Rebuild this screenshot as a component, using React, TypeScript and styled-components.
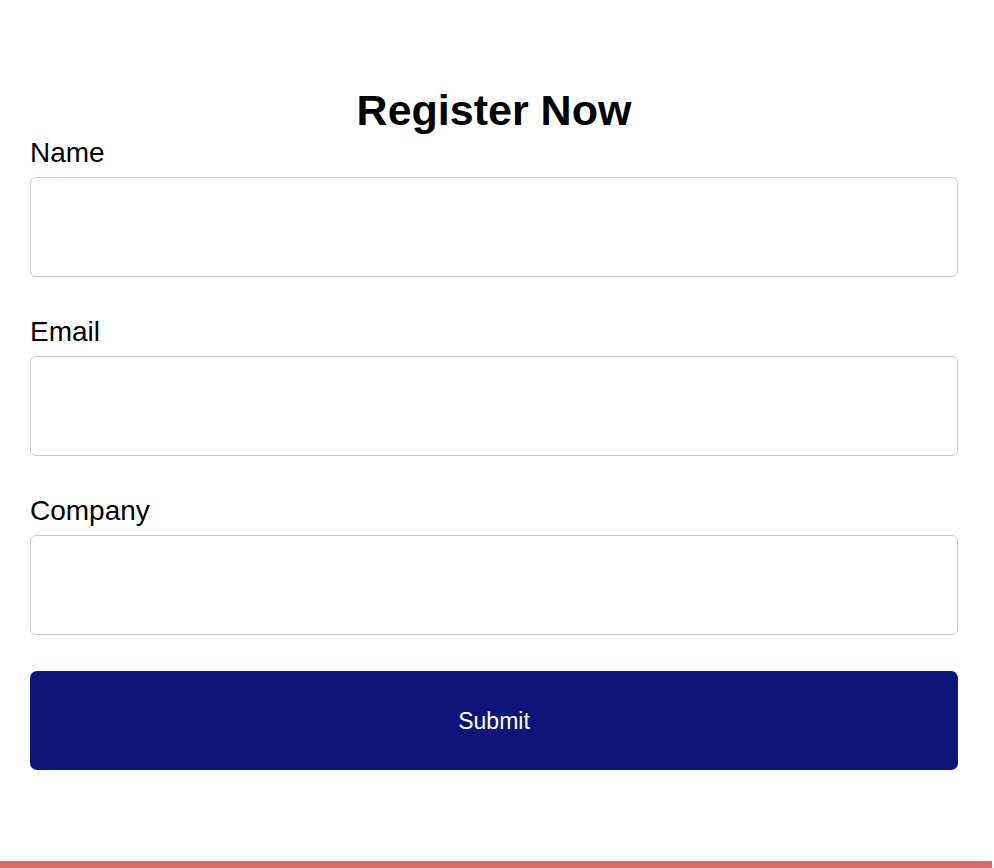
import React from "react";
import styled, { createGlobalStyle } from "styled-components";

const Global = createGlobalStyle`
  html, body { margin: 0; padding: 0; background: #ffffff; }
  body { font-family: "Liberation Sans", Arial, sans-serif; color: #000; }
  * { box-sizing: border-box; }
`;

const Page = styled.div`
  min-height: 868px;
  display: flex;
  flex-direction: column;
`;

const Form = styled.form`
  flex: 1;
  display: flex;
  flex-direction: column;
  padding: 86px 36px 0 30px;
`;

const Title = styled.h1`
  margin: 0;
  font-size: 43px;
  font-weight: 700;
  text-align: center;
  line-height: 48px;
`;

const Field = styled.div`
  display: flex;
  flex-direction: column;
  gap: 8px;
  margin-bottom: 36px;
`;

const Label = styled.label`
  padding-top: 3px;
  font-size: 28px;
  line-height: 32px;
`;

const Input = styled.input`
  height: 100px;
  width: 100%;
  border: 1px solid #cccccc;
  border-radius: 6px;
  padding: 0 12px;
  font-size: 20px;
  font-family: inherit;
  outline: none;
`;

const Button = styled.button`
  height: 99px;
  width: 100%;
  padding-top: 2px;
  border: none;
  border-radius: 7px;
  background: #0e1578;
  color: #ffffff;
  font-family: inherit;
  font-size: 23px;
  cursor: pointer;
`;

const Footer = styled.div`
  height: 7px;
  margin-right: 2px;
  background: #d66a6a;
`;

export default function App() {
  return (
    <Page>
      <Global />
      <Form onSubmit={(e) => e.preventDefault()}>
        <Title>Register Now</Title>
        <Field>
          <Label htmlFor="name">Name</Label>
          <Input id="name" type="text" />
        </Field>
        <Field>
          <Label htmlFor="email">Email</Label>
          <Input id="email" type="email" />
        </Field>
        <Field>
          <Label htmlFor="company">Company</Label>
          <Input id="company" type="text" />
        </Field>
        <Button type="submit">Submit</Button>
      </Form>
      <Footer />
    </Page>
  );
}
